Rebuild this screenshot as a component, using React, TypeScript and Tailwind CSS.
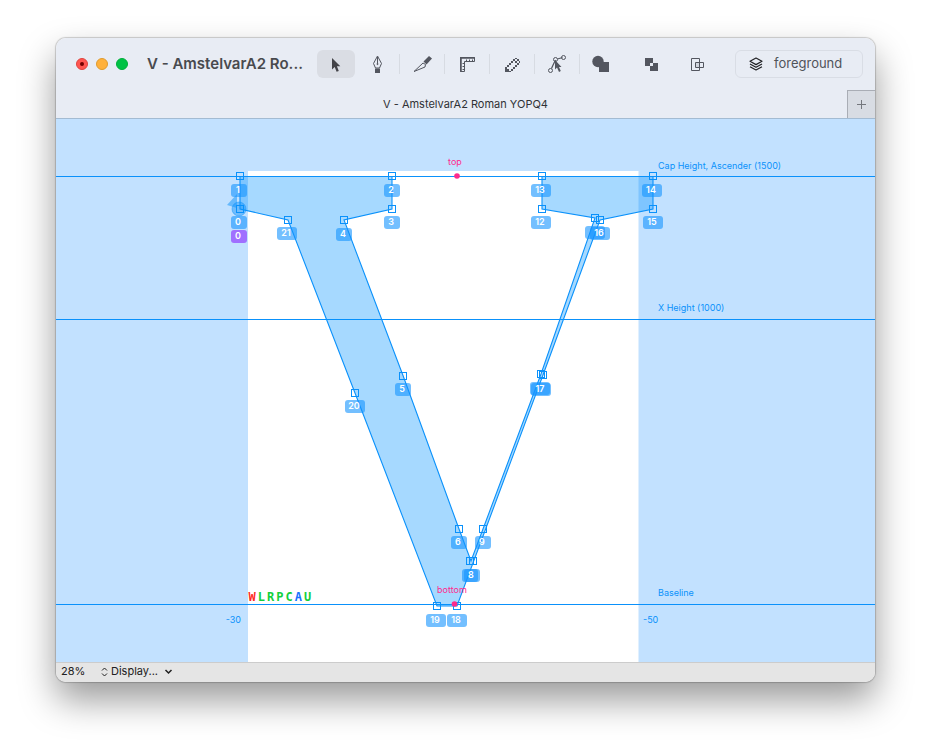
import React from "react";

const BLUE = "#0a91fb";

type Marker = { id: number; x: number; y: number; bx: number; by: number; covered?: boolean };

// A covered marker's badge lies beneath its neighbour's, so its number is not drawn.
const markers: Marker[] = [
  { id: 1, x: 240, y: 176, bx: 239, by: 190 },
  { id: 2, x: 392, y: 176, bx: 392, by: 190 },
  { id: 3, x: 392, y: 209, bx: 392, by: 222 },
  { id: 4, x: 344, y: 220, bx: 344, by: 234 },
  { id: 5, x: 403, y: 376, bx: 403, by: 389 },
  { id: 6, x: 459, y: 529, bx: 459, by: 542 },
  { id: 7, x: 470, y: 561, bx: 470, by: 575, covered: true },
  { id: 8, x: 473, y: 561, bx: 472, by: 575 },
  { id: 9, x: 483, y: 529, bx: 483, by: 542 },
  { id: 10, x: 541, y: 374, bx: 540, by: 388, covered: true },
  { id: 11, x: 595, y: 218, bx: 595, by: 232, covered: true },
  { id: 12, x: 542, y: 209, bx: 541, by: 222 },
  { id: 13, x: 542, y: 176, bx: 541, by: 190 },
  { id: 14, x: 653, y: 176, bx: 652, by: 190 },
  { id: 15, x: 653, y: 209, bx: 653, by: 222 },
  { id: 16, x: 600, y: 220, bx: 600, by: 233 },
  { id: 17, x: 543, y: 375, bx: 541, by: 389 },
  { id: 18, x: 457, y: 606, bx: 457, by: 620 },
  { id: 19, x: 437, y: 606, bx: 436, by: 620 },
  { id: 20, x: 355, y: 393, bx: 355, by: 406 },
  { id: 21, x: 288, y: 220, bx: 287, by: 233 },
  { id: 0, x: 240, y: 209, bx: 239, by: 222 },
];

const indicators = [
  { letter: "W", color: "#ff2a1f" },
  { letter: "L", color: "#12cf3c" },
  { letter: "R", color: "#12cf3c" },
  { letter: "P", color: "#12cf3c" },
  { letter: "C", color: "#12cf3c" },
  { letter: "A", color: "#1673ff" },
  { letter: "U", color: "#12cf3c" },
];

const guides = [
  { y: 176, labelY: 169, name: "Cap Height, Ascender (1500)" },
  { y: 319, labelY: 311, name: "X Height (1000)" },
  { y: 604, labelY: 596, name: "Baseline" },
];

type BadgeProps = { id: number; x: number; y: number; color: string; covered?: boolean };

function Badge({ id, x, y, color, covered }: BadgeProps) {
  const width = id > 9 ? 20 : 16;
  return (
    <g>
      <rect x={x - width / 2} y={y - 6} width={width} height={13} rx={3} fill={color} fillOpacity={0.6} />
      {!covered && (
        <text x={x - 1} y={y + 3} textAnchor="middle" fontSize={9} fontWeight={600} fill="#fff">
          {id}
        </text>
      )}
    </g>
  );
}

function GlyphCanvas() {
  return (
    <svg
      viewBox="56 119 819 543"
      className="block w-full font-['Inter','Liberation_Sans',sans-serif]"
      role="img"
      aria-label="Glyph outline"
    >
      <rect x={56} y={119} width={819} height={543} fill="#c2e1ff" />
      <rect x={248} y={171} width={390} height={491} fill="#fff" />
      <rect x={638} y={171} width={1} height={491} fill="#e0f0ff" />
      {guides.map((g) => (
        <g key={g.name}>
          <rect x={56} y={g.y} width={819} height={1} fill={BLUE} />
          <text x={658} y={g.labelY} fontSize={9} fill={BLUE}>
            {g.name}
          </text>
        </g>
      ))}
      <path
        d="M240 176.500H392V209L344 220L403 375.500L459 529L471 561L483 529L541 374L595 218L542 209V176.500H653V209L600 220L543 375L457 606H437L355 393L288 220L240 209Z"
        fill="#0091ff"
        fillOpacity={0.35}
        stroke={BLUE}
        strokeWidth={1.1}
      />
      <path d="M227 205L237 194V208Z" fill={BLUE} fillOpacity={0.5} />
      <circle cx={239} cy={209} r={7} fill={BLUE} fillOpacity={0.45} stroke={BLUE} strokeOpacity={0.45} />
      {markers.map((m) => (
        <rect key={m.id} x={m.x - 3.5} y={m.y - 3.5} width={7} height={7} fill="none" stroke={BLUE} />
      ))}
      {markers.map((m) => (
        <Badge key={m.id} id={m.id} x={m.bx} y={m.by} color="#1694ff" covered={m.covered} />
      ))}
      <Badge id={0} x={239} y={236} color="#8925ff" />
      <g fill="#ff2a8c" fontSize={9} textAnchor="middle">
        <text x={455} y={165}>top</text>
        <circle cx={457} cy={176} r={2.800} />
        <text x={452} y={593}>bottom</text>
        <circle cx={454.500} cy={604} r={2.800} />
      </g>
      <g fill={BLUE} fontSize={9}>
        <text x={241} y={623} textAnchor="end">-30</text>
        <text x={643} y={623}>-50</text>
      </g>
      <g className="font-['DejaVu_Sans_Mono',monospace]" fontSize={12} fontWeight={700} textAnchor="middle">
        {indicators.map((l, i) => (
          <text key={l.letter} x={252 + i * 9.25} y={601} fill={l.color}>
            {l.letter}
          </text>
        ))}
      </g>
    </svg>
  );
}

function Tool({ label, active, children }: { label: string; active?: boolean; children: React.ReactNode }) {
  return (
    <button
      aria-label={label}
      className={
        active
          ? "flex h-7 w-[38px] shrink-0 items-center justify-center rounded-md bg-[#dadde4] text-[#444449]"
          : "flex h-7 w-[38px] shrink-0 items-center justify-center rounded-md text-[#53565f]"
      }
    >
      <svg width="20" height="20" viewBox="0 0 20 20" fill="none" stroke="currentColor" aria-hidden="true">
        {children}
      </svg>
    </button>
  );
}

function Divider() {
  return <div className="h-5 w-px shrink-0 bg-[#d7dbe2]" />;
}

function Toolbar() {
  return (
    <div className="flex items-center">
      <div className="flex items-center gap-[3px]">
        <Tool label="Select" active>
          <path d="M6 4V15.500L8.700 13L10.600 17.800L12.800 16.900L10.900 12.300H14.300Z" fill="currentColor" stroke="none" />
        </Tool>
        <Tool label="Pen">
          <path d="M10.500 2L6.500 9.500L8.500 14H12.500L14.500 9.500ZM10.500 3V9.500" />
          <circle cx="10.500" cy="10" r="0.600" fill="currentColor" />
          <rect x="8" y="14.500" width="5" height="4.500" fill="currentColor" stroke="none" />
        </Tool>
        <Divider />
        <Tool label="Knife">
          <path d="M11 9L2 17.500L13 13L13.500 10.500Z" />
          <path d="M11.500 7.500L17 2L20 4.500L14.500 10.500Z" fill="currentColor" stroke="none" />
        </Tool>
        <Divider />
        <Tool label="Measure">
          <path d="M3 3.500H17.500V7.500H7.500V17.500H3.500V3" />
          <path d="M3 4H18M4 3V18" strokeWidth="1.500" />
          <path d="M9.500 7.500V5.500M12.500 7.500V5.500M15.500 7.500V5.500M7.500 9.500H5.500M7.500 12.500H5.500M7.500 15.500H5.500" />
        </Tool>
        <Divider />
        <Tool label="Pixel pencil">
          <path
            d="M3 13h2v2h2v2h2v1H3zM5 11h2v2H5zM7 9h2v2H7zM9 7h2v2H9zM11 5h2v2h-2zM13 7h2v2h-2zM9 15h2v2H9zM11 13h2v2h-2zM13 11h2v2h-2zM15 9h2v2h-2zM15 5h2v2h-2zM13 4h2v1h-2zM17 7h1v2h-1z"
            fill="currentColor"
            stroke="none"
          />
        </Tool>
        <Divider />
        <Tool label="Edit curve">
          <path d="M4.500 14.500C6 11 7 9 8.500 6M10.500 5L15.500 3.500" strokeWidth="1.300" />
          <circle cx="3.500" cy="16.500" r="2" />
          <circle cx="8.500" cy="5.500" r="2" />
          <circle cx="16.500" cy="3.500" r="2" />
          <path d="M8 6V15.500L10 13.500L12 18L13.800 17L12 13H14.500Z" fill="currentColor" stroke="none" />
        </Tool>
        <Divider />
      </div>
      <Tool label="Union">
        <circle cx="9" cy="7.500" r="5.700" fill="currentColor" stroke="none" />
        <rect x="10" y="8" width="10" height="10" fill="currentColor" stroke="none" />
      </Tool>
      <div className="ml-[14px] flex items-center gap-2">
        <Tool label="Exclude">
          <path d="M4 4h8v5h5v8H9v-5H4zM9 9v3h3v-3z" fill="currentColor" fillRule="evenodd" stroke="none" />
        </Tool>
        <Tool label="Intersect">
          <path d="M4.500 4.500H12.500V16.500H4.500ZM8.500 8.500H16.500V13.500H8.500Z" />
          <path d="M9 9H12V13H9Z" fill="currentColor" fillOpacity="0.150" stroke="none" />
        </Tool>
      </div>
    </div>
  );
}

export default function App() {
  return (
    <main className="bg-white px-14 pt-[38px] pb-[74px] font-['Inter','Liberation_Sans',sans-serif]">
      <div className="overflow-hidden rounded-[10px] shadow-[0_0_1px_1px_rgba(0,0,0,0.18),0_18px_36px_rgba(0,0,0,0.4)]">
        <header className="border-b border-[#a3bbd2] bg-[#e8ecf4]">
          <div className="flex h-[52px] items-center pr-3 pl-5">
            <div className="flex shrink-0 gap-2">
              <button aria-label="Close" className="flex h-3 w-3 items-center justify-center rounded-full border border-[#e0443e] bg-[#ff5650]">
                <span className="h-1 w-1 rounded-full bg-[#730000]" />
              </button>
              <button aria-label="Minimize" className="h-3 w-3 rounded-full border border-[#e09b2d] bg-[#ffb13c]" />
              <button aria-label="Zoom" className="h-3 w-3 rounded-full border border-[#00ae3a] bg-[#00c245]" />
            </div>
            <h1 className="ml-[19px] w-[170px] shrink-0 text-[15px] font-semibold whitespace-nowrap text-[#484a4e]">V - AmstelvarA2 Ro...</h1>
            <Toolbar />
            <button className="ml-auto flex h-7 w-32 shrink-0 items-center rounded-md border border-[#d9dde5] pl-3 text-[13px] text-[#50535a]">
              <svg width="16" height="16" viewBox="0 0 16 16" fill="none" stroke="#222326" strokeWidth="1.200" strokeLinejoin="round" aria-hidden="true">
                <path d="M8 2L14 5.300L8 8.600L2 5.300Z" />
                <path d="M2 8L8 11.300L14 8M2 10.700L8 14L14 10.700" />
              </svg>
              <span className="ml-[10px]">foreground</span>
            </button>
          </div>
          <div className="flex h-7">
            <div className="w-7" />
            <button className="flex-1 text-[11px] text-[#303236]">V - AmstelvarA2 Roman YOPQ4</button>
            <button aria-label="New tab" className="flex w-7 items-center justify-center border-t border-l border-[#a9adb5] bg-[#d8dce3]">
              <svg width="11" height="11" viewBox="0 0 11 11" stroke="#74777d" aria-hidden="true">
                <path d="M5.500 1V10M1 5.500H10" />
              </svg>
            </button>
          </div>
        </header>
        <GlyphCanvas />
        <footer className="flex h-5 items-center border-t border-[#cccccc] bg-[#e5e5e5] pb-0.5 pl-[5px] text-[11px] text-[#202020]">
          <span className="w-10">28%</span>
          <button className="flex items-center">
            <svg width="7" height="10" viewBox="0 0 7 10" fill="none" stroke="currentColor" aria-hidden="true">
              <path d="M1 3.500L3.500 1L6 3.500M1 6.500L3.500 9L6 6.500" />
            </svg>
            <span className="ml-[3px]">Display...</span>
            <svg className="ml-[6px]" width="9" height="9" viewBox="0 0 9 9" fill="none" stroke="currentColor" strokeWidth="1.500" aria-hidden="true">
              <path d="M1.500 3L4.500 6L7.500 3" />
            </svg>
          </button>
        </footer>
      </div>
    </main>
  );
}
